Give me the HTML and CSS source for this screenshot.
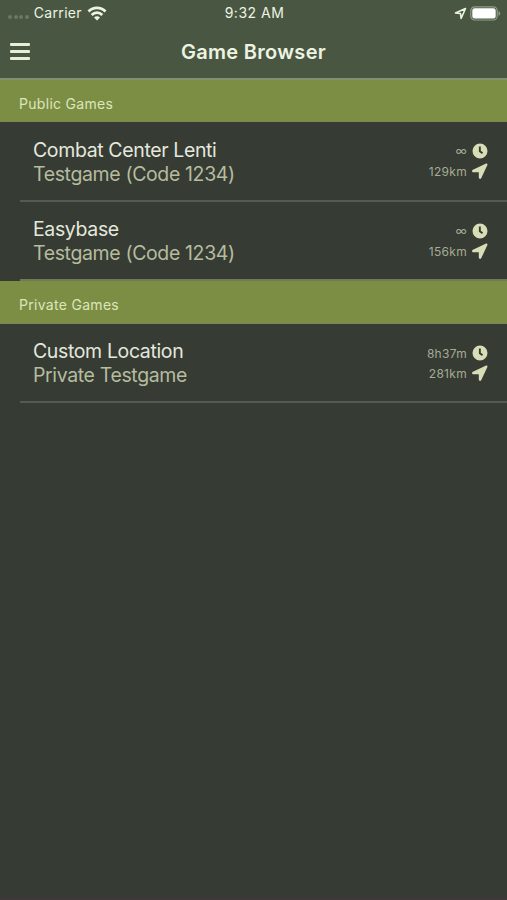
FILE: index.html
```html
<!DOCTYPE html>
<html lang="en">
<head>
<meta charset="utf-8">
<title>Game Browser</title>
<link rel="stylesheet" href="styles.css">
</head>
<body>
<svg class="defs" aria-hidden="true">
  <symbol id="clock" viewBox="0 0 16 16"><path fill-rule="evenodd" d="M8 .5a7.500 7.500 0 1 0 0 15 7.500 7.500 0 0 0 0-15ZM6.900 3.400h1.900v4.300l2.300 1.700-1.100 1.600-3.100-2.300Z"/></symbol>
  <symbol id="arrow" viewBox="0 0 16 16"><path d="M14.100.6.9 6.700C-.5 7.400 0 9.200 1.400 9.200h5.400v5.400c0 1.400 1.800 1.900 2.500.5L15.400 1.900C15.800 1 15 .2 14.100.6Z"/></symbol>
</svg>
<header class="header">
  <div class="status">
    <div class="status-left">
      <span class="dots"><i></i><i></i><i></i><i></i></span>
      <span class="carrier">Carrier</span>
      <svg class="wifi" viewBox="0 0 20 15"><g fill="none" stroke="currentColor" stroke-width="2.800"><path d="M1.500 5.400a12 12 0 0 1 17 0"/><path d="M4.700 8.900a7.500 7.500 0 0 1 10.600 0"/></g><path fill="currentColor" d="M7 11.500a4.200 4.200 0 0 1 6 0L10 14.500Z"/></svg>
    </div>
    <span class="time">9:32 AM</span>
    <div class="status-right">
      <svg class="location" viewBox="0 0 13 13"><path fill="none" stroke="currentColor" stroke-width="1.600" stroke-linejoin="round" d="M11.500 1.500 1.500 5.900l5 .6.6 5Z"/></svg>
      <svg class="battery" viewBox="0 0 31 15"><rect x=".8" y=".8" width="26.400" height="13.200" rx="4" fill="none" stroke="#91a086" stroke-width="1.200"/><rect x="2.300" y="2.300" width="23.400" height="10.200" rx="2.500" fill="#fff"/><path fill="#91a086" d="M28.500 5q1.700.7 1.700 2.400t-1.700 2.400Z"/></svg>
    </div>
  </div>
  <div class="nav">
    <div class="menu"><i></i><i></i><i></i></div>
    <h1 class="heading">Game Browser</h1>
  </div>
</header>
<main>
  <h2 class="section">Public Games</h2>
  <div class="row first">
    <div class="names"><div class="place">Combat Center Lenti</div><div class="game">Testgame (Code 1234)</div></div>
    <div class="facts">
      <div class="fact"><span class="infinity">∞</span><svg class="icon"><use href="#clock"/></svg></div>
      <div class="fact"><span>129km</span><svg class="icon"><use href="#arrow"/></svg></div>
    </div>
  </div>
  <div class="row last">
    <div class="names"><div class="place">Easybase</div><div class="game">Testgame (Code 1234)</div></div>
    <div class="facts">
      <div class="fact"><span class="infinity">∞</span><svg class="icon"><use href="#clock"/></svg></div>
      <div class="fact"><span>156km</span><svg class="icon"><use href="#arrow"/></svg></div>
    </div>
  </div>
  <h2 class="section private">Private Games</h2>
  <div class="row">
    <div class="names"><div class="place">Custom Location</div><div class="game">Private Testgame</div></div>
    <div class="facts">
      <div class="fact"><span>8h37m</span><svg class="icon"><use href="#clock"/></svg></div>
      <div class="fact"><span>281km</span><svg class="icon"><use href="#arrow"/></svg></div>
    </div>
  </div>
</main>
</body>
</html>
```
FILE: styles.css
```css
* { box-sizing: border-box; }
body {
  margin: 0;
  height: 900px;
  overflow: hidden;
  background: #363b33;
  border-bottom: 2px solid #42383a;
  font-family: Inter, "Liberation Sans", sans-serif;
  color: #e4e8dd;
}
svg { display: block; }
.defs { display: none; }
.header {
  height: 80px;
  background: #495742;
  border-bottom: 2px solid #80916f;
  color: #edf3e1;
}
.status {
  display: grid;
  grid-template-columns: 1fr auto 1fr;
  align-items: center;
  height: 26px;
  padding: 0 6px 0 8px;
  font-size: 14px;
  line-height: 26px;
}
.status-left, .status-right { display: flex; align-items: center; }
.status-right { justify-content: flex-end; gap: 3px; }
.dots { display: flex; gap: 1.600px; margin: 8px 5px 0 0; }
.dots i { width: 4px; height: 4px; border-radius: 50%; background: #6c7863; }
.carrier { letter-spacing: .32px; }
.time { letter-spacing: .5px; }
.wifi { width: 20px; height: 15px; margin-left: 5px; }
.location { width: 13px; height: 13px; }
.battery { width: 31px; height: 15px; }
.nav {
  display: grid;
  grid-template-columns: 1fr auto 1fr;
  align-items: center;
  height: 50px;
  padding: 0 10px;
}
.menu { display: flex; flex-direction: column; gap: 4px; width: 20px; }
.menu i { height: 3px; border-radius: 1px; background: #e7efd7; }
.heading { margin: 0; padding-top: 2px; font-size: 20px; line-height: 26px; font-weight: 600; letter-spacing: .3px; }
.section {
  display: flex;
  align-items: center;
  height: 42px;
  margin: 0;
  padding: 5px 19px 0;
  background: #7c8e43;
  border-bottom: 1px solid #7d8756;
  font-size: 14px;
  font-weight: 400;
  letter-spacing: .3px;
  color: #dde5bd;
}
.private { height: 43px; }
.row {
  display: flex;
  justify-content: space-between;
  height: 79px;
  margin-left: 20px;
  padding: 15px 19px 0 13px;
  border-bottom: 2px solid #555b51;
}
.first { height: 80px; padding-top: 16px; }
.last { border-bottom-color: #6f7b56; }
.place, .game { font-size: 19.5px; line-height: 24px; letter-spacing: -.37px; white-space: nowrap; }
.game { color: #b5bc9f; }
.facts { padding-top: 4px; font-size: 12px; letter-spacing: .3px; color: #a5ab98; }
.first .facts { padding-top: 3px; }
.fact { display: flex; align-items: center; justify-content: flex-end; height: 20px; gap: 5px; }
.first .names { margin-top: 0; }
.infinity { line-height: 16px; }
.icon { width: 16px; height: 16px; fill: #d6ddb7; }
```
